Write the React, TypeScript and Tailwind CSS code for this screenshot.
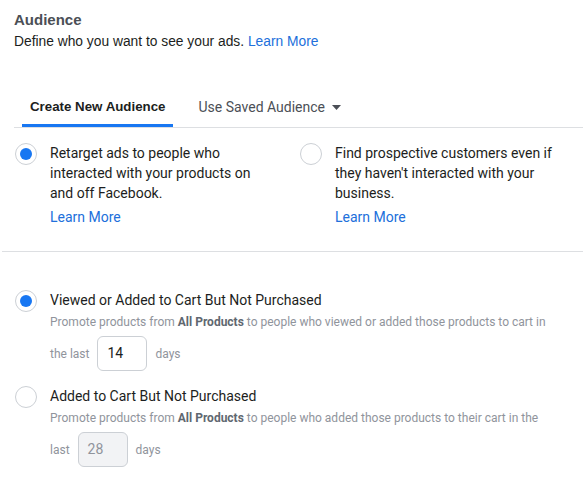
import React from "react";

const ROBOTO = { fontFamily: "Roboto, 'Liberation Sans', sans-serif" };
const HELV = { fontFamily: "'Liberation Sans', Arial, sans-serif" };

function Radio({ checked }: { checked?: boolean }) {
  return (
    <span className="flex h-[22px] w-[22px] shrink-0 items-center justify-center rounded-full border border-[#ccd0d5] bg-white">
      {checked && <span className="h-[12px] w-[12px] rounded-full bg-[#1877f2]" />}
    </span>
  );
}

function DaysRow({ label, value, disabled }: { label: string; value: string; disabled?: boolean }) {
  return (
    <div className="mt-[6px] flex items-center gap-[8px] text-[12px] text-[#90949c]">
      <span>{label}</span>
      <div
        className={`flex h-[35px] w-[50px] items-center rounded-[6px] border border-[#ccd0d5] px-[9px] text-[14px] ${
          disabled ? "bg-[#f2f3f5] text-[#90949c]" : "bg-white text-[#1c1e21]"
        }`}
      >
        {value}
      </div>
      <span>days</span>
    </div>
  );
}

export default function App() {
  return (
    <div className="h-[479px] w-[583px] overflow-hidden bg-white text-[#1c1e21]" style={ROBOTO}>
      <div className="px-[14px] pt-[10px]">
        <h1 className="text-[15px] font-bold leading-5 text-[#4b4f56]" style={HELV}>Audience</h1>
        <p className="mt-[2px] text-[13.8px] leading-5 text-[#1c1e21]" style={HELV}>
          Define who you want to see your ads. <span className="text-[#216fdb]">Learn More</span>
        </p>
      </div>

      <div className="ml-[14px] mt-[35px] flex gap-[17px] border-b border-[#dddfe2] pl-[8px]">
        <div
          className="border-b-[3px] border-[#1877f2] px-[8px] pb-[7px] pt-[10px] text-[13.3px] font-bold leading-5"
          style={HELV}
        >
          Create New Audience
        </div>
        <div className="flex items-center gap-[7px] px-[8px] pb-[10px] pt-[10px] text-[14px] leading-5 text-[#4b4f56]">
          Use Saved Audience
          <svg width="9" height="5" viewBox="0 0 9 5">
            <path d="M0 0h9L4.5 5z" fill="#4b4f56" />
          </svg>
        </div>
      </div>

      <div className="flex pl-[15px] pt-[15px]">
        <div className="flex w-[285px] gap-[13px]">
          <Radio checked />
          <div className="w-[210px] text-[14px] leading-5">
            <p>Retarget ads to people who interacted with your products on and off Facebook.</p>
            <p className="mt-[4px] text-[#216fdb]">Learn More</p>
          </div>
        </div>
        <div className="flex gap-[13px]">
          <Radio />
          <div className="w-[235px] text-[14px] leading-5">
            <p>Find prospective customers even if they haven't interacted with your business.</p>
            <p className="mt-[4px] text-[#216fdb]">Learn More</p>
          </div>
        </div>
      </div>

      <div className="ml-[2px] mt-[24px] border-t border-[#dddfe2]" />

      <div className="flex flex-col gap-[15px] pl-[15px] pt-[38px]">
        <div className="flex gap-[13px]">
          <Radio checked />
          <div className="w-[505px]">
            <p className="text-[14px] leading-5">Viewed or Added to Cart But Not Purchased</p>
            <p className="mt-[4px] text-[12px] leading-4 text-[#90949c]">
              Promote products from <span className="font-bold text-[#606770]">All Products</span> to people who viewed or
              added those products to cart in
            </p>
            <DaysRow label="the last" value="14" />
          </div>
        </div>
        <div className="flex gap-[13px]">
          <Radio />
          <div className="w-[505px]">
            <p className="text-[14px] leading-5">Added to Cart But Not Purchased</p>
            <p className="mt-[4px] text-[12px] leading-4 text-[#90949c]">
              Promote products from <span className="font-bold text-[#606770]">All Products</span> to people who added those
              products to their cart in the
            </p>
            <DaysRow label="last" value="28" disabled />
          </div>
        </div>
      </div>
    </div>
  );
}
